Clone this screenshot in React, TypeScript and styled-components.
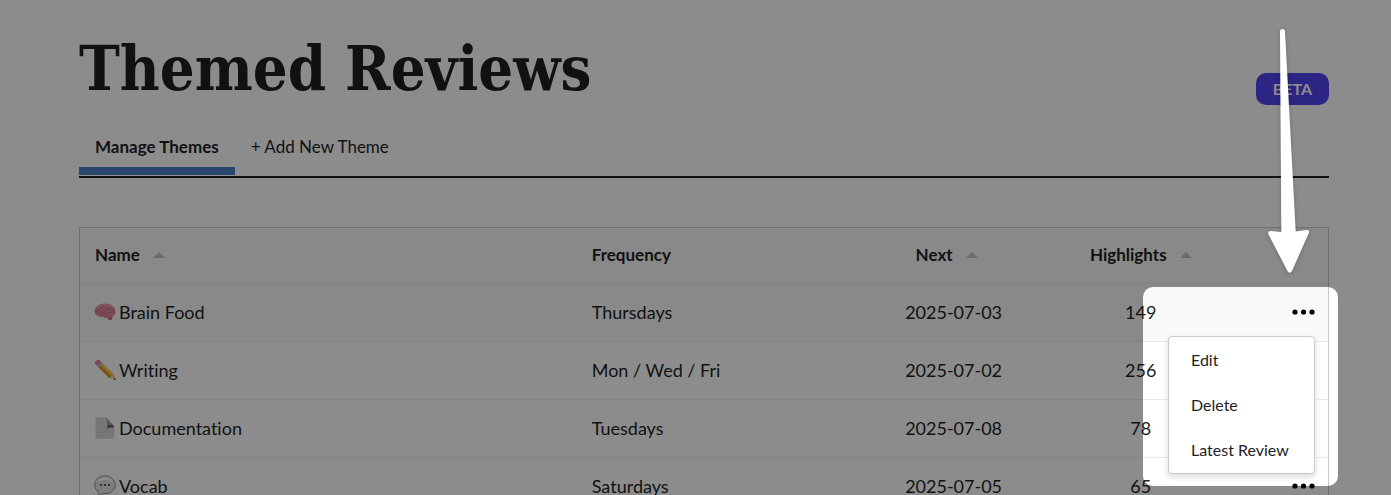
import React from "react";
import styled, { createGlobalStyle } from "styled-components";

const GlobalStyle = createGlobalStyle`
  *, *::before, *::after { box-sizing: border-box; }
  body {
    margin: 0;
    background: #fff;
    color: #1f1f1f;
    font-family: Lato, "Open Sans", sans-serif;
    font-size: 18px;
    font-variant-ligatures: none;
  }
`;

const Page = styled.main`
  position: relative;
  height: 100vh;
  overflow: hidden;
  padding: 25px 62px 0 79px;
`;

const Header = styled.header`
  display: flex;
  align-items: flex-end;
  justify-content: space-between;
  height: 80px;
`;

const Title = styled.h1`
  margin: 0;
  align-self: flex-start;
  font-family: "DejaVu Serif Condensed", "DejaVu Serif", serif;
  font-stretch: condensed;
  font-size: 61px;
  line-height: 88px;
  font-weight: 700;
  white-space: nowrap;
`;

const Badge = styled.span`
  padding: 0 17px;
  border-radius: 10px;
  background: #5044ee;
  color: #fff;
  font-size: 16px;
  font-weight: 700;
  line-height: 32px;
`;

const Tabs = styled.nav`
  display: flex;
  margin-top: 23px;
  padding-bottom: 1px;
  border-bottom: 2px solid #1f1f1f;
`;

const Tab = styled.a<{ $active?: boolean }>`
  padding: 8px 16px 9px;
  border-bottom: 8px solid ${(p) => (p.$active ? "#4c80ca" : "transparent")};
  color: inherit;
  font-size: 17px;
  font-weight: ${(p) => (p.$active ? 700 : 400)};
  line-height: 22px;
  text-decoration: none;
`;

const Table = styled.table`
  width: 100%;
  margin-top: 49px;
  border: 1px solid #c9c9cc;
  border-collapse: separate;
  border-spacing: 0;
  table-layout: fixed;
`;

const Col = styled.col<{ $width: string }>`
  width: ${(p) => p.$width};
`;

const Row = styled.tr<{ $shaded?: boolean }>`
  background: ${(p) => (p.$shaded ? "#f9f9f9" : "#fff")};
`;

const HeadCell = styled.th<{ $align?: "center" | "right" }>`
  height: 56px;
  padding: 0 15px 2px;
  border-bottom: 1px solid #ebebeb;
  font-size: 17px;
  font-weight: 700;
  text-align: ${(p) => p.$align ?? "left"};
`;

const Cell = styled.td<{ $center?: boolean }>`
  height: 58px;
  padding: 0 15px 2px;
  border-bottom: 1px solid #ebebeb;
  text-align: ${(p) => (p.$center ? "center" : "left")};
`;

const SortButton = styled.button<{ $inset?: boolean }>`
  display: inline-flex;
  align-items: center;
  gap: 13px;
  padding: 0 ${(p) => (p.$inset ? "14px" : "0")} 0 0;
  border: 0;
  background: none;
  color: inherit;
  font: inherit;
`;

const SortMark = styled.span`
  border: 6px solid transparent;
  border-top: 0;
  border-bottom: 6px solid #b8c7ce;
`;

const Name = styled.div`
  display: flex;
  align-items: center;
  gap: 3px;
  margin-left: -1px;
`;

const Actions = styled.div`
  position: relative;
  display: flex;
  justify-content: flex-end;
`;

const MoreButton = styled.button`
  display: flex;
  padding: 8px 0;
  margin-right: -2px;
  border: 0;
  background: none;
  color: #000;
`;

const Menu = styled.ul`
  position: absolute;
  z-index: 2;
  top: 35px;
  right: -2px;
  width: 147px;
  margin: 0;
  padding: 0 0 1px;
  border: 1px solid #c9c9cf;
  border-radius: 4px;
  background: #fff;
  box-shadow: 0 3px 6px rgba(0, 0, 0, 0.15);
  list-style: none;
`;

const MenuButton = styled.button`
  display: block;
  width: 100%;
  height: 45px;
  padding: 0 22px;
  border: 0;
  background: none;
  color: #222;
  font-family: inherit;
  font-size: 16px;
  text-align: left;
  white-space: nowrap;
`;

const Spotlight = styled.div`
  position: absolute;
  z-index: 3;
  top: -14px;
  right: -25px;
  width: 195px;
  height: 199px;
  border-radius: 10px;
  box-shadow: 0 0 0 200vmax rgba(0, 0, 0, 0.45);
  pointer-events: none;
`;

const Arrow = styled.svg`
  position: absolute;
  z-index: 4;
  top: -276px;
  right: 3px;
  overflow: visible;
  pointer-events: none;
  filter: drop-shadow(0 1px 2px rgba(0, 0, 0, 0.2));
`;

const Brain = () => (
  <svg width="22" height="22" viewBox="0 0 22 22" aria-hidden="true">
    <path d="M13.500 15.500c1-1.500 4.500-1.500 5 .5.2 1.500-1 3.400-2.500 3.400-1.500 0-2.800-1.800-2.500-3.900z" fill="#c9776f" />
    <path d="M.7 11C.3 6.500 4.500 2.700 10.500 2.500c5.500-.2 10.600 2.800 11 7.600.2 3.200-1.200 5.300-4 5.600-2 .2-2.700-.2-4 .7-1.500 1-3.500.6-5-.6-1.500.6-3.500.2-4.300-1C2 14.300.8 13 .7 11z" fill="#dd8a9c" />
    <path d="M4 7c2-2.500 5-3.500 8-3.200s5 1 6.500 2.500" fill="none" stroke="#f0b3bf" strokeWidth="1.200" strokeLinecap="round" />
    <path d="M2.500 10c1.500-2 3-.5 4.500-2s.5-3.500 3-4M5 13c1-1.800 3.500-.5 5-2.500s3-.5 4-2.500 2.500-1 4-.5M9 14.500c1-1.500 3-.5 4.500-2s3.500 0 5.500-1.500" fill="none" stroke="#bd6179" strokeWidth=".6" strokeLinecap="round" />
  </svg>
);

const Pencil = () => (
  <svg width="22" height="22" viewBox="0 0 22 22" aria-hidden="true">
    <path d="M1 4.500C.5 2.500 3.500.2 5.300 1L8 3.500 3.700 7.500z" fill="#e3808a" />
    <path d="M3 6.800L7.200 2.800l2 1.900L5 8.800z" fill="#a9b9c8" />
    <path d="M5 8.800l4.200-4.100L20 15.500 15.500 19z" fill="#efb431" />
    <path d="M6.400 7.400L17 18l-1.500 1L5 8.800z" fill="#cf8520" />
    <path d="M8 5.900l1.200-1.200L20 15.500l-1.200 1z" fill="#ffd65a" />
    <path d="M15.500 19l4.500-3.500 1.600 5.600z" fill="#eed0a3" />
    <path d="M19.500 20.400l1.500-1.200.6 2z" fill="#222" />
  </svg>
);

const Document = () => (
  <svg width="22" height="22" viewBox="0 0 22 22" aria-hidden="true">
    <path d="M2 .8h10.500c.6 3 3 6 7.300 8v12.400H2z" fill="#dadada" stroke="#bebebe" strokeWidth=".5" />
    <path d="M11.500.8c2 .4 2.500 3 1.800 11 2-1.400 4.500-1.600 6.500-1V9z" fill="#686868" />
    <path d="M12.500.8L19.800 9c-2-1.500-4-1.500-5.500-1 .4-3-.1-5.500-1.800-7.200z" fill="#aaa" />
    <path d="M4 6h7M4 9h8M4 12h9M4 15h13M4 18.500h4" stroke="#c4c4c4" strokeWidth=".6" />
  </svg>
);

const Speech = () => (
  <svg width="22" height="22" viewBox="0 0 22 22" aria-hidden="true">
    <path d="M11 .9c6 0 10.200 3.800 10.200 8.900S17 18.700 11 18.700c-.8 0-1.700-.1-2.400-.2-1.300 1.300-3 2.100-5 2.300 1-1 1.300-2.200 1-3.600C2.200 15.500.8 13 .8 9.800.8 4.700 5 .9 11 .9z" fill="#e4e4e4" stroke="#989898" strokeWidth="1" />
    <path d="M3 7.500c.8-3 4-5 8-5s7.200 2 8 5c-2-2-5-2.500-8-2.500S5 5.500 3 7.500z" fill="#fff" />
    <g fill="#444">
      <circle cx="7" cy="10" r="1.100" />
      <circle cx="11" cy="10" r="1.100" />
      <circle cx="15" cy="10" r="1.100" />
    </g>
  </svg>
);

const Dots = () => (
  <svg width="23" height="6" viewBox="0 0 23 6" aria-hidden="true">
    <circle cx="3" cy="3" r="2.600" />
    <circle cx="11.500" cy="3" r="2.600" />
    <circle cx="20" cy="3" r="2.600" />
  </svg>
);

const themes = [
  { icon: <Brain />, name: "Brain Food", frequency: "Thursdays", next: "2025-07-03", count: 149 },
  { icon: <Pencil />, name: "Writing", frequency: "Mon / Wed / Fri", next: "2025-07-02", count: 256 },
  { icon: <Document />, name: "Documentation", frequency: "Tuesdays", next: "2025-07-08", count: 78 },
  { icon: <Speech />, name: "Vocab", frequency: "Saturdays", next: "2025-07-05", count: 65 },
];

const Sortable = ({ label, inset }: { label: string; inset?: boolean }) => (
  <SortButton type="button" $inset={inset}>
    {label}
    <SortMark />
  </SortButton>
);

const ThemeMenu = () => (
  <>
    <Menu>
      {["Edit", "Delete", "Latest Review"].map((item) => (
        <li key={item}>
          <MenuButton type="button">{item}</MenuButton>
        </li>
      ))}
    </Menu>
    <Spotlight />
    <Arrow width="42" height="250" viewBox="1268 25 42 250" aria-hidden="true">
      <path
        d="M1280 32Q1280 29 1282.500 29Q1285 29 1285 32L1295.700 231.500L1306.500 230Q1310 229.800 1308.800 233L1292 271Q1289.700 274.500 1287.500 271L1268.500 234.500Q1267 231 1270.500 231L1281.300 232Z"
        fill="#fff"
      />
    </Arrow>
  </>
);

export default function App() {
  return (
    <>
      <GlobalStyle />
      <Page>
        <Header>
          <Title>Themed Reviews</Title>
          <Badge>BETA</Badge>
        </Header>
        <Tabs>
          <Tab href="#manage" $active>
            Manage Themes
          </Tab>
          <Tab href="#new">+ Add New Theme</Tab>
        </Tabs>
        <Table>
          <colgroup>
            <Col $width="39.8%" />
            <Col $width="22.7%" />
            <Col $width="15%" />
            <Col $width="15%" />
            <Col $width="7.5%" />
          </colgroup>
          <thead>
            <Row $shaded>
              <HeadCell>
                <Sortable label="Name" />
              </HeadCell>
              <HeadCell>Frequency</HeadCell>
              <HeadCell $align="center">
                <Sortable label="Next" inset />
              </HeadCell>
              <HeadCell $align="center">
                <Sortable label="Highlights" />
              </HeadCell>
              <HeadCell aria-label="Actions" />
            </Row>
          </thead>
          <tbody>
            {themes.map((theme, index) => (
              <Row key={theme.name} $shaded={index === 0}>
                <Cell>
                  <Name>
                    {theme.icon}
                    {theme.name}
                  </Name>
                </Cell>
                <Cell>{theme.frequency}</Cell>
                <Cell $center>{theme.next}</Cell>
                <Cell $center>{theme.count}</Cell>
                <Cell>
                  <Actions>
                    <MoreButton type="button" aria-label={`Actions for ${theme.name}`}>
                      <Dots />
                    </MoreButton>
                    {index === 0 && <ThemeMenu />}
                  </Actions>
                </Cell>
              </Row>
            ))}
          </tbody>
        </Table>
      </Page>
    </>
  );
}
